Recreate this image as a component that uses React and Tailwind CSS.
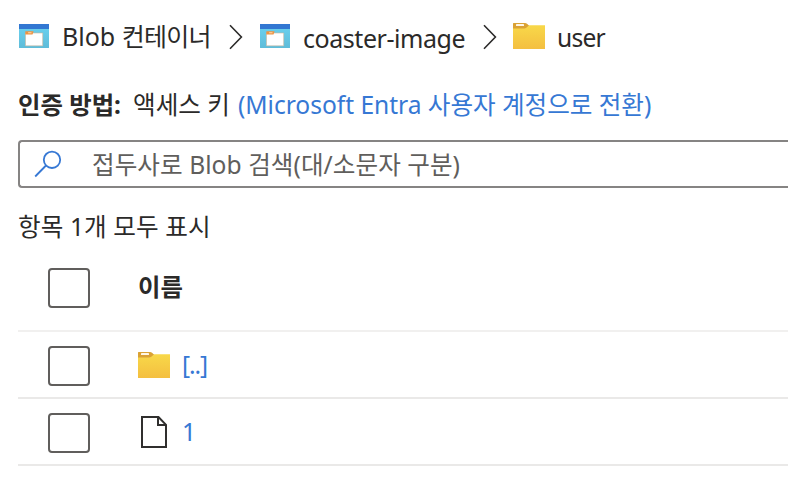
import React from 'react';

function ContainerIcon() {
  return (
    <svg className="block h-6 w-[30px] shrink-0" viewBox="0 0 30 24">
      <defs>
        <linearGradient id="container-body" x1="0" y1="0" x2="0" y2="1">
          <stop offset="0" stopColor="#6ad3f1" />
          <stop offset="1" stopColor="#5fbcd9" />
        </linearGradient>
      </defs>
      <rect width="30" height="24" rx="0.5" fill="url(#container-body)" />
      <rect width="30" height="5" fill="#3277d2" />
      <path d="M6.5 9h17.2v12.8H6.5z" fill="#fff" stroke="#cfb79c" strokeWidth="0.6" />
      <path d="M6.3 7.3h8.3l-1.1 3.2H6.3z" fill="#ee9340" />
      <rect x="9" y="8.2" width="3.6" height="1" rx="0.5" fill="#fbd9b0" />
    </svg>
  );
}

function FolderIcon() {
  return (
    <svg className="block h-[26px] w-8 shrink-0" viewBox="0 0 32 26">
      <defs>
        <linearGradient id="folder-body" x1="0" y1="0" x2="0" y2="1">
          <stop offset="0" stopColor="#f8d849" />
          <stop offset="1" stopColor="#f4bf40" />
        </linearGradient>
      </defs>
      <path d="M0 .6Q0 0 .6 0H12q1.2 0 2 .8L16.5 3 14 5.2q-.8.8-2 .8H0z" fill="#daa235" />
      <path d="M0 5.6h11.5q1 0 1.8-.8l2-1.9q.6-.6 1.5-.6H32V26H0z" fill="url(#folder-body)" />
      <rect x="3" y="1.1" width="8" height="1.9" rx="0.3" fill="#fff6e6" />
    </svg>
  );
}

function Chevron() {
  return (
    <svg className="block h-[26px] w-[14px] shrink-0" viewBox="0 0 14 26" fill="none" stroke="#2c2b2a" strokeWidth="1.6">
      <path d="M1 1.2 12.4 13 1 24.8" />
    </svg>
  );
}

function SearchIcon() {
  return (
    <svg className="block h-7 w-7 shrink-0" viewBox="0 0 28 28" fill="none" stroke="#3678d4" strokeWidth="1.8">
      <circle cx="18" cy="9.8" r="8.2" />
      <path d="M12 15.5 1.2 26.5" />
    </svg>
  );
}

function FileIcon() {
  return (
    <svg className="block h-8 w-[26px] shrink-0" viewBox="0 0 26 32" fill="none" stroke="#302f2e" strokeWidth="2">
      <path d="M1 1h16.5L25 8.8V31H1z" />
      <path d="M17 1v8h8" />
    </svg>
  );
}

function Checkbox() {
  return <span role="checkbox" aria-checked="false" className="block h-10 w-[42px] shrink-0 rounded-[4px] border-2 border-[#605e5c] bg-white" />;
}

export default function App() {
  return (
    <main
      lang="ko"
      className="h-[492px] w-[788px] overflow-hidden bg-white pl-[18px] text-[24.6px] leading-10 whitespace-nowrap text-[#2b2a29] [font-family:'Noto_Sans','Noto_Sans_CJK_KR',sans-serif]"
    >
      <nav className="flex h-[72px] items-center pl-px">
        <ContainerIcon />
        <span className="ml-[13px] w-[149px] text-[25px]">
          Blob <span className="tracking-[-0.75px]">컨테이너</span>
        </span>
        <span className="ml-[18px] pt-0.5"><Chevron /></span>
        <span className="ml-[17px]"><ContainerIcon /></span>
        <span className="ml-[13px] w-[162px] pt-[3px] text-[25px] tracking-[-0.45px]">coaster-image</span>
        <span className="ml-[18px] pt-0.5"><Chevron /></span>
        <span className="ml-4"><FolderIcon /></span>
        <span className="ml-3 pt-[3px] tracking-[-0.8px]">user</span>
      </nav>
      <p className="mt-[13px] flex h-10">
        <strong className="w-[102px] text-[24.4px]">인증 방법:</strong>
        <span className="ml-[13px] w-[97px]">액세스 키</span>
        <a className="ml-2 tracking-[-0.03px] text-[#3678d4]">(Microsoft Entra 사용자 계정으로 전환)</a>
      </p>
      <div className="mt-[15px] flex h-12 items-center rounded-l-[4px] border-2 border-r-0 border-[#868483] pl-[14px] text-[#605e5c]">
        <SearchIcon />
        <span className="ml-[30px] pt-0.5 tracking-[0.05px]">접두사로 Blob 검색(대/소문자 구분)</span>
      </div>
      <p className="mt-[19px] h-10 tracking-[0.1px]">항목 1개 모두 표시</p>
      <section>
        <div className="flex h-[85px] items-center border-b-2 border-[#f1f0ef] pb-0.5 pl-[30px]">
          <Checkbox />
          <strong className="ml-12 pb-0.5 text-[24.4px]">이름</strong>
        </div>
        <div className="flex h-[67px] items-center border-b-2 border-[#eae9e8] pl-[30px]">
          <div className="pt-0.5"><Checkbox /></div>
          <span className="ml-12"><FolderIcon /></span>
          <a className="ml-3 tracking-[-1.1px] text-[#3678d4]">[..]</a>
        </div>
        <div className="flex h-[67px] items-center border-b-2 border-[#eae9e8] pl-[30px]">
          <div className="pt-0.5"><Checkbox /></div>
          <span className="ml-[51px]"><FileIcon /></span>
          <a className="ml-[15px] text-[#3678d4]">1</a>
        </div>
      </section>
    </main>
  );
}
